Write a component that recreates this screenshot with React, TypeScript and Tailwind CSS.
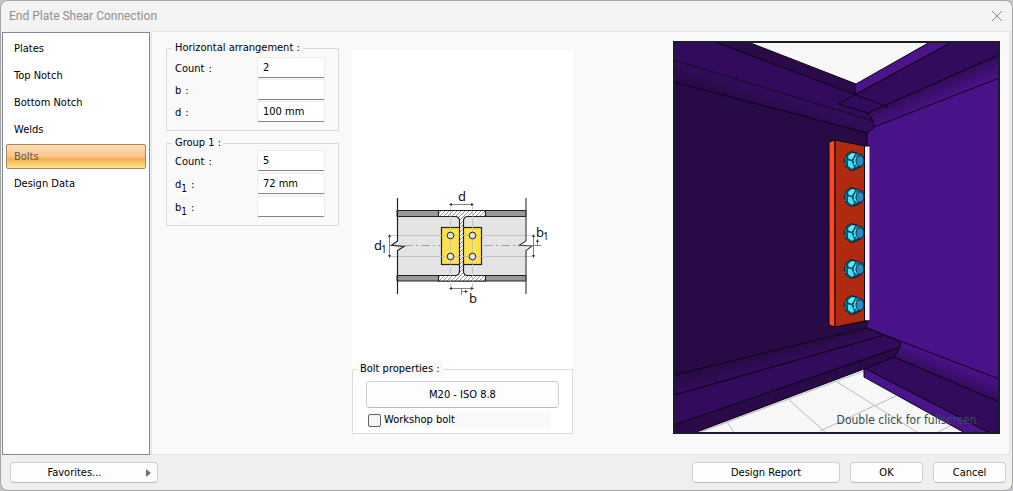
import React, { useState } from "react";

const tabs = ["Plates", "Top Notch", "Bottom Notch", "Welds", "Bolts", "Design Data"];

const boltRows = [161, 197, 233, 269, 305];

type FieldProps = {
  id: string;
  label: string;
  sub?: string;
  value: string;
  onChange: (e: React.ChangeEvent<HTMLInputElement>) => void;
};

const Field = ({ id, label, sub, value, onChange }: FieldProps) => {
  return (
    <div className="flex items-start justify-between">
      <label className="flex gap-1 pt-1" htmlFor={id}>
        <span>
          {label}
          {sub && <sub className="-bottom-1 bg-white text-[10px]">{sub}</sub>}
        </span>
        :
      </label>
      <input
        className="h-[21px] w-[68px] rounded-xs border border-[#ececec] border-b-[#868686] bg-white px-[5px] outline-none"
        id={id}
        name={id}
        type="text"
        value={value}
        onChange={onChange}
      />
    </div>
  );
};

const Diagram = () => {
  return (
    <svg className="h-[130px] w-[220px]" viewBox="352 180 220 130" fill="none" stroke="#222">
      <defs>
        <pattern id="hatch" width="4" height="4" patternUnits="userSpaceOnUse">
          <rect width="4" height="4" fill="#fff" stroke="none" />
          <path d="M-1 1L1 -1M0 4L4 0M3 5L5 3" stroke="#666" strokeWidth="0.7" />
        </pattern>
      </defs>
      <rect x="397.500" y="216" width="128.500" height="60" fill="#e4e4e4" stroke="none" />
      <path d="M397 210.500H526V216.500H397ZM397 275.500H526V281H397Z" fill="#999" />
      <rect x="441.500" y="227.500" width="40" height="37" fill="#ffe14d" strokeWidth="1.200" />
      <path
        d="M438.500 210.500H485.500V216.500H468Q463.500 216.500 463.500 221V271Q463.500 275.500 468 275.500H485.500V281H438.500V275.500H455Q459.500 275.500 459.500 271V221Q459.500 216.500 455 216.500H438.500Z"
        fill="url(#hatch)"
        strokeWidth="1.200"
      />
      <path
        d="M390 235.500H533M390 256.500H533M450.500 203V289M472.500 203V289"
        stroke="#b4b4b4"
        strokeWidth="0.700"
        strokeDasharray="7 1"
      />
      <path d="M404 245.500H440M484 245.500H519" stroke="#888" strokeWidth="0.700" strokeDasharray="9 3 2 3" />
      <path d="M450 204.500H473M450 288.500H473M389.500 235V257M533.500 235V257M461.500 288V295M461.500 291.500H466M533 245.500H541M537.500 245V240" stroke="#666" strokeWidth="0.800" />
      <path d="M449 204.500l3-1.500v3zM474 204.500l-3-1.500v3zM449 288.500l3-1.500v3zM474 288.500l-3-1.500v3zM389.500 234l-1.500 3h3zM389.500 258l-1.500-3h3zM533.500 234l-1.500 3h3zM533.500 258l-1.500-3h3zM468 291.500l-3-1.500v3zM537.500 239l-1.500 3h3z" fill="#333" stroke="none" />
      <path d="M397.500 241L391.500 245.300L404 246.500L397.500 250.500Z" fill="#e4e4e4" stroke="none" />
      <path d="M526 241L519.500 245.300L532 246L526 250.500Z" fill="#fff" stroke="none" />
      <path d="M397.500 198V241L391.500 245.300L404 246.500L397.500 250.500V294" strokeWidth="1.200" />
      <path d="M526 198V241L519.500 245.300L532 246L526 250.500V294" stroke="#444" strokeWidth="1.200" />
      <g fill="#e4e4e4">
        <circle cx="450.500" cy="235.500" r="3.300" />
        <circle cx="472.500" cy="235.500" r="3.300" />
        <circle cx="450.500" cy="256.500" r="3.300" />
        <circle cx="472.500" cy="256.500" r="3.300" />
      </g>
      <g className="font-['Noto_Sans',sans-serif] text-[13px]" fill="#111" stroke="none">
        <text x="458" y="201">d</text>
        <text x="469" y="303">b</text>
        <text x="374" y="250">d</text>
        <text x="536" y="237">b</text>
        <text className="text-[10px]" x="381" y="253">1</text>
        <text className="text-[10px]" x="543" y="240">1</text>
      </g>
    </svg>
  );
};

const Scene = () => {
  return (
    <svg className="block w-full" viewBox="675 43 323 389" strokeLinejoin="round">
      <defs>
        <linearGradient id="topLeft" gradientUnits="userSpaceOnUse" x1="770" y1="88" x2="763" y2="109">
          <stop offset="0" stopColor="#340d5f" />
          <stop offset="1" stopColor="#280a46" />
        </linearGradient>
        <linearGradient id="topRight" gradientUnits="userSpaceOnUse" x1="930" y1="86" x2="938" y2="104">
          <stop offset="0" stopColor="#330c5d" />
          <stop offset="1" stopColor="#4a1289" />
        </linearGradient>
        <linearGradient id="bottomLeft" gradientUnits="userSpaceOnUse" x1="770" y1="352" x2="775" y2="370">
          <stop offset="0" stopColor="#280a46" />
          <stop offset="1" stopColor="#340d5f" />
        </linearGradient>
        <linearGradient id="bottomRight" gradientUnits="userSpaceOnUse" x1="950" y1="361" x2="943" y2="379">
          <stop offset="0" stopColor="#4a1289" />
          <stop offset="1" stopColor="#330c5d" />
        </linearGradient>
      </defs>
      <rect x="675" y="43" width="323" height="389" fill="#f7f7f7" />
      <path
        d="M701 432L864 371M837 382L917 432M788 399L825 432M727 422L734 432M896 396L874 406L820 431M938 432L952 425"
        fill="none"
        stroke="#b8bcbc"
      />
      {/* webs */}
      <path d="M675 80L867 132V328L675 376Z" fill="#280a46" />
      <path d="M867 128L998 76V380L867 330Z" fill="#4a1289" />
      <g stroke="#0b0514" strokeWidth="1">
        {/* top flanges */}
        <path d="M715 42L748 42L856 84V95Z" fill="#2a0a49" />
        <path d="M856 84L930 42H952L856 94Z" fill="#4b148a" stroke="none" />
        <path d="M856 84L930 42M952 42L856 94" />
        <path d="M952 42H999V55L868 113L838 104Z" fill="#320b5c" stroke="none" />
        <path d="M952 42L838 104L868 113L999 55" fill="none" />
        <path d="M868 113L999 55V78L874 127Z" fill="url(#topRight)" />
        <path d="M674 42H715L856 94L838 104L868 113L873 121L674 60Z" fill="#320b5c" stroke="none" />
        <path d="M715 42L888 107M856 94L838 104L868 113L873 121" fill="none" />
        <path d="M674 60L873 121L874 128L867 133L674 82Z" fill="url(#topLeft)" />
        <path d="M867 132V146M867 320V329" />
        {/* bottom flanges */}
        <path d="M867 328L900 341L999 379V402L894 357Z" fill="url(#bottomRight)" />
        <path d="M894 357L999 402V433H990L864 368Z" fill="#320b5c" />
        <path d="M864 368L990 433H965L864 377Z" fill="#4b148a" />
        <path d="M674 425L900 347L897 353L894 357L864 369L694 433H674Z" fill="#2a0a49" />
        <path d="M674 395L884 335L900 341V347L674 425Z" fill="#320b5c" />
        <path d="M674 375L867 328L884 335L674 395Z" fill="url(#bottomLeft)" />
        {/* end plate */}
        <path d="M829 142L835 140V327L829 325Z" fill="#ff4a1c" />
        <path d="M835 140L865 146V321L835 327Z" fill="#b02a10" />
        <path d="M865 146H869.500V320.500H865Z" fill="#fbeeff" stroke="none" />
        <path d="M865 146H870M865 321H870M864.500 146V321" />
      </g>
      {boltRows.map((y) => (
        <g key={y} transform={`translate(853 ${y})`} stroke="#06222c" strokeWidth="0.900">
          <path d="M-7 -6L-2 -9.500L4 -8L7 -5V6L3 8.500L-2 9.500L-7 6L-9 0Z" fill="#155f78" />
          <path d="M-8 -4L-6 0L-8 4" fill="none" stroke="#2ec8e0" strokeDasharray="1 1" />
          <path d="M-5 -5L-1 -8.500L5 -7.500L10 -5.500L11 1L8 6L3 7L-1 8L-5 5L-6 0Z" fill="#2a90ba" />
          <path d="M-5 -5L-1 -8L2 -7L-1 -1L-4 -2Z" fill="#4cf0ff" stroke="none" />
          <path d="M-5 0L-1 0L2 5L-1 8L-5 5Z" fill="#3fe2fa" stroke="none" />
          <path d="M-5 -2L-1 -0.500L3 -7M-1 -0.500L2 7" fill="none" />
          <path d="M7 -5H3L0.500 -2V3L3 5H7Z" fill="#4cdcf2" strokeDasharray="1.500 1" />
          <ellipse cx="7" cy="0" rx="4" ry="5.200" fill="#2a8cc4" />
        </g>
      ))}
    </svg>
  );
};

export default function App() {
  const [active, setActive] = useState("Bolts");
  const [workshop, setWorkshop] = useState(false);
  const [values, setValues] = useState({
    hCount: "2",
    b: "",
    d: "100 mm",
    gCount: "5",
    d1: "72 mm",
    b1: "",
  });

  const handleChange = (e: React.ChangeEvent<HTMLInputElement>) => {
    setValues((prev) => {
      return { ...prev, [e.target.name]: e.target.value };
    });
  };

  const button =
    "rounded-sm border border-[#d0d0d0] border-b-[#bcbcbc] bg-[#fdfdfd] text-center";

  return (
    <div className="min-h-screen bg-[#c4c4c8]">
      <div className="flex min-h-screen flex-col overflow-hidden rounded-lg border border-[#a5a5a5] bg-[#efefef] font-['DejaVu_Sans_Condensed','DejaVu_Sans',sans-serif] text-[11px] leading-4 text-black">
        <header className="flex h-[30px] items-center justify-between bg-[#f3f3f3] pr-[9px] pl-2">
          <h1 className="font-[Roboto,sans-serif] text-xs text-[#8f8f8f]">
            End Plate Shear Connection
          </h1>
          <button type="button" aria-label="Close">
            <svg className="size-3" viewBox="0 0 12 12" stroke="#8a8a8a">
              <path d="M1 1L11 11M11 1L1 11" />
            </svg>
          </button>
        </header>

        <main className="flex grow gap-px pr-[2px]">
          <nav className="mt-px ml-px flex w-[148px] shrink-0 flex-col gap-[2px] border border-[#828790] bg-white px-[3px] pt-[3px]">
            {tabs.map((tab) => (
              <button
                key={tab}
                type="button"
                className={
                  tab === active
                    ? "h-[25px] w-full rounded-xs border border-[#a8875a] bg-[linear-gradient(#fbdcb8,#f8c488_54%,#f6a945_56%,#fde48f)] px-[7px] text-left text-[#5a5a5a]"
                    : "h-[25px] w-full border border-transparent px-[7px] text-left"
                }
                onClick={() => setActive(tab)}
              >
                {tab}
              </button>
            ))}
          </nav>

          <div className="flex grow items-start border border-[#e6e6e6] bg-[#f9f9f9] pr-[9px] pl-[14px]">
            <div className="w-[173px] shrink-0 pt-2">
              <fieldset className="h-[91px] border border-[#dcdcdc] pr-[13px] pl-2">
                <legend className="-ml-[3px] px-[3px]">Horizontal arrangement :</legend>
                <div className="flex flex-col gap-px pt-px">
                  <Field id="hCount" label="Count" value={values.hCount} onChange={handleChange} />
                  <Field id="b" label="b" value={values.b} onChange={handleChange} />
                  <Field id="d" label="d" value={values.d} onChange={handleChange} />
                </div>
              </fieldset>
              <fieldset className="mt-1 h-[91px] border border-[#dcdcdc] pr-[13px] pl-2">
                <legend className="-ml-[3px] px-[3px]">Group 1 :</legend>
                <div className="-mt-px flex flex-col gap-[2px]">
                  <Field id="gCount" label="Count" value={values.gCount} onChange={handleChange} />
                  <Field id="d1" label="d" sub="1" value={values.d1} onChange={handleChange} />
                  <Field id="b1" label="b" sub="1" value={values.b1} onChange={handleChange} />
                </div>
              </fieldset>
            </div>

            <div className="mt-[18px] ml-[13px] w-[221px] shrink-0 bg-white">
              <div className="pt-[130px] pb-[51px]">
                <Diagram />
              </div>
              <fieldset className="h-[73px] border border-[#dcdcdc] px-[13px]">
                <legend className="-ml-[9px] bg-[#f9f9f9] px-[3px]">Bolt properties :</legend>
                <button type="button" className={`${button} mt-1 block h-[27px] w-full`}>
                  M20 - ISO 8.8
                </button>
                <label className="mt-1 mr-2 ml-[2px] flex items-center gap-[3px] bg-[#f9f9f9]">
                  <input
                    className="size-[13px] appearance-none rounded-xs border border-[#626262] bg-[#f5f5f5] checked:bg-[#005fb8]"
                    type="checkbox"
                    checked={workshop}
                    onChange={(e) => setWorkshop(e.target.checked)}
                  />
                  Workshop bolt
                </label>
              </fieldset>
            </div>

            <div className="relative mt-[9px] ml-auto w-[327px] shrink-0 border-2 border-[#1b1b2e]">
              <Scene />
              <p className="absolute right-[18px] bottom-1 text-xs text-[#2f4f4f]">
                Double click for fullscreen.
              </p>
            </div>
          </div>
        </main>

        <footer className="flex h-[35px] items-center gap-[10px] pr-[6px] pl-[9px]">
          <button type="button" className={`${button} mr-auto flex h-[21px] w-[148px] items-center`}>
            <span className="grow pr-2">Favorites...</span>
            <svg className="mr-[6px] h-2 w-[5px]" viewBox="0 0 5 8">
              <path d="M0 0L5 4L0 8Z" fill="#707070" />
            </svg>
          </button>
          <button type="button" className={`${button} h-[21px] w-[148px]`}>
            Design Report
          </button>
          <button type="button" className={`${button} h-[21px] w-[73px]`}>
            OK
          </button>
          <button type="button" className={`${button} h-[21px] w-[73px]`}>
            Cancel
          </button>
        </footer>
      </div>
    </div>
  );
}
